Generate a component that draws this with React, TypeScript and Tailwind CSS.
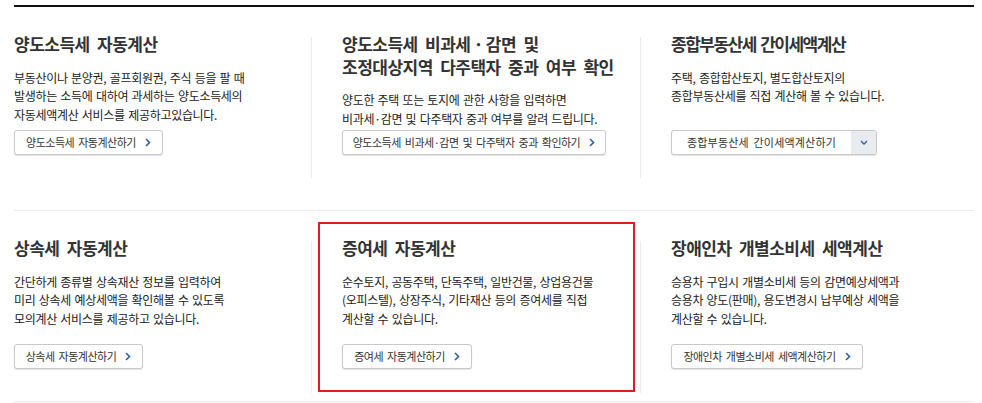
import React from "react";

type Card = {
  title: React.ReactNode;
  titleClass?: string;
  desc: string[];
  button: string;
  btnW: string;
  dropdown?: boolean;
  highlight?: boolean;
};

const Arrow = () => (
  <svg width="6" height="9" viewBox="0 0 6 9" className="shrink-0">
    <path d="M1 1 L4.5 4.5 L1 8" fill="none" stroke="#2d5fa8" strokeWidth="1.6" />
  </svg>
);

const Chevron = () => (
  <svg width="8" height="5" viewBox="0 0 8 5">
    <path d="M1 1 L4 4 L7 1" fill="none" stroke="#2d5fa8" strokeWidth="1.3" />
  </svg>
);

function Button({ card }: { card: Card }) {
  if (card.dropdown) {
    return (
      <div className={`flex h-[25px] ${card.btnW} rounded-[3px] border border-[#c9c9c9] bg-white shadow-[0_1px_1px_rgba(0,0,0,0.12)] overflow-hidden`}>
        <div className="flex flex-1 items-center justify-center text-[11px] text-[#333] tracking-[0.2px] [word-spacing:2px]">
          {card.button}
        </div>
        <div className="flex w-[25px] items-center justify-center bg-[#e8ecef]">
          <Chevron />
        </div>
      </div>
    );
  }
  return (
    <div className={`flex h-[25px] ${card.btnW} items-center justify-center gap-[9px] rounded-[3px] border border-[#c9c9c9] bg-white shadow-[0_1px_1px_rgba(0,0,0,0.12)] text-[11px] tracking-[-0.5px] [word-spacing:2px] text-[#333]`}>
      <span>{card.button}</span>
      <Arrow />
    </div>
  );
}

function Cell({ card, first, textH, cellH }: { card: Card; first: boolean; textH: string; cellH: string }) {
  return (
    <div className={`relative ${cellH} ${first ? "" : "border-l border-[#ececec] pl-[30px]"}`}>
      {card.highlight && (
        <div className="pointer-events-none absolute left-[6px] top-[-19px] h-[170px] w-[317px] border-2 border-[#e31b23]" />
      )}
      <div className={`${textH}`}>
        <div className={`mt-[-4px] text-[17px] font-bold leading-[22.5px] text-[#333] ${card.titleClass ?? "tracking-[-0.5px] [word-spacing:4px]"}`}>
          {card.title}
        </div>
        <div className="mt-[13px] text-[12px] leading-[18.5px] tracking-[-0.3px] [word-spacing:1px] text-[#222]">
          {card.desc.map((l, i) => (
            <div key={i}>{l}</div>
          ))}
        </div>
      </div>
      <Button card={card} />
    </div>
  );
}

const row1: Card[] = [
  {
    title: "양도소득세 자동계산",
    desc: [
      "부동산이나 분양권, 골프회원권, 주식 등을 팔 때",
      "발생하는 소득에 대하여 과세하는 양도소득세의",
      "자동세액계산 서비스를 제공하고있습니다.",
    ],
    button: "양도소득세 자동계산하기",
    btnW: "w-[149px]",
  },
  {
    title: (
      <>
        {"양도소득세 비과세\u2009·\u2009감면 및"}
        <br />
        {"조정대상지역 다주택자 중과 여부 확인"}
      </>
    ),
    desc: [
      "양도한 주택 또는 토지에 관한 사항을 입력하면",
      "비과세·감면 및 다주택자 중과 여부를 알려 드립니다.",
    ],
    button: "양도소득세 비과세·감면 및 다주택자 중과 확인하기",
    btnW: "w-[264px]",
  },
  {
    title: "종합부동산세 간이세액계산",
    titleClass: "tracking-[-1.5px] [word-spacing:2px]",
    desc: ["주택, 종합합산토지, 별도합산토지의", "종합부동산세를 직접 계산해 볼 수 있습니다."],
    button: "종합부동산세 간이세액계산하기",
    btnW: "w-[206px]",
    dropdown: true,
  },
];

const row2: Card[] = [
  {
    title: "상속세 자동계산",
    desc: [
      "간단하게 종류별 상속재산 정보를 입력하여",
      "미리 상속세 예상세액을 확인해볼 수 있도록",
      "모의계산 서비스를 제공하고 있습니다.",
    ],
    button: "상속세 자동계산하기",
    btnW: "w-[129px]",
  },
  {
    title: "증여세 자동계산",
    desc: [
      "순수토지, 공동주택, 단독주택, 일반건물, 상업용건물",
      "(오피스텔), 상장주식, 기타재산 등의 증여세를 직접",
      "계산할 수 있습니다.",
    ],
    button: "증여세 자동계산하기",
    btnW: "w-[130px]",
    highlight: true,
  },
  {
    title: "장애인차 개별소비세 세액계산",
    desc: [
      "승용차 구입시 개별소비세 등의 감면예상세액과",
      "승용차 양도(판매), 용도변경시 납부예상 세액을",
      "계산할 수 있습니다.",
    ],
    button: "장애인차 개별소비세 세액계산하기",
    btnW: "w-[192px]",
  },
];

export default function App() {
  return (
    <div className="h-[403px] w-[982px] overflow-hidden bg-white font-['Noto_Sans_CJK_KR',sans-serif] pt-[5px]">
      <div className="ml-[14px] w-[960px] border-t-2 border-[#111]">
        <div className="grid grid-cols-[297px_329px_334px] pt-[30px] pb-[32px] border-b border-[#ececec]">
          {row1.map((c, i) => (
            <Cell key={i} card={c} first={i === 0} textH="h-[97px]" cellH="h-[141px]" />
          ))}
        </div>
        <div className="grid grid-cols-[297px_329px_334px] pt-[30px] pb-[8px] border-b border-[#ececec]">
          {row2.map((c, i) => (
            <Cell key={i} card={c} first={i === 0} textH="h-[107px]" cellH="h-[152px]" />
          ))}
        </div>
      </div>
    </div>
  );
}
